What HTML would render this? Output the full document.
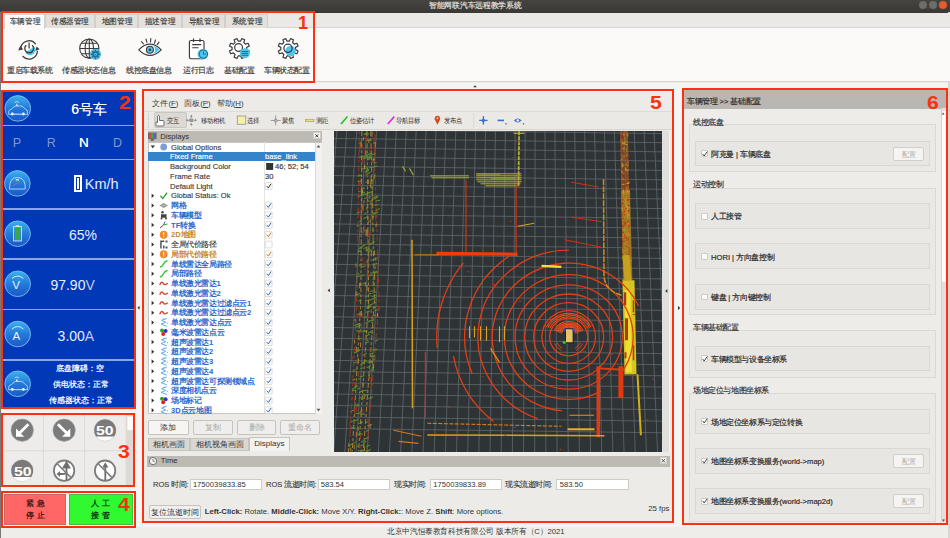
<!DOCTYPE html>
<html><head><meta charset="utf-8">
<style>
*{margin:0;padding:0;box-sizing:border-box}
html,body{width:950px;height:538px;overflow:hidden;background:#efede9;font-family:"Liberation Sans",sans-serif;color:#3c3c3c;position:relative}
.a{position:absolute}
.rb{position:absolute;border:2px solid #ff3010}
.lbl{position:absolute;color:#ff3010;font-weight:bold;font-size:18px;line-height:18px;transform:scaleX(1.18);transform-origin:0 0}
.t{position:absolute;white-space:nowrap;line-height:1}
/* title bar */
#tb{left:0;top:0;width:950px;height:12.5px;background:linear-gradient(#45443f,#3a3935)}
.wb{position:absolute;top:1.3px;width:8.2px;height:8.2px;border-radius:50%;background:#6e6d69}
/* tab row */
#tabrow{left:1px;top:12.5px;width:949px;height:15.7px;background:#ebe9e6;border-bottom:1px solid #d6d3ce}
.tab{position:absolute;-webkit-text-stroke:0.15px #363636;top:14px;height:14px;background:#e4e1dc;border:1px solid #d2cfca;border-bottom:none;font-size:8px;color:#363636;text-align:center;line-height:14px}
#tools{left:1px;top:28.2px;width:949px;height:53.6px;background:#fcfaf8;border-bottom:1px solid #d8d5d0}
.ic{position:absolute}
.il{position:absolute;top:66.8px;font-size:8px;color:#333;-webkit-text-stroke:0.15px #333;white-space:nowrap;line-height:8px;transform:scale(0.95);transform-origin:0 50%}
/* left */
#blue{left:3px;top:92px;width:131px;height:315px;background:#0038b8}
.sep{position:absolute;left:3px;width:131px;height:1.5px;background:#8aa6e6}
.wt{position:absolute;color:#fff;white-space:nowrap;line-height:1}
.circ{position:absolute;width:26px;height:26px;border-radius:50%;background:radial-gradient(circle at 50% 30%,#3aa8f0,#1d6fd6 60%,#1a5fc8);border:1px solid #6fb4f2}
.tr{position:absolute;white-space:nowrap;line-height:1;font-size:8px;-webkit-text-stroke:0.15px currentColor;transform:scale(0.95);transform-origin:0 50%}
.tb8{position:absolute;white-space:nowrap;line-height:1;font-size:7px;color:#2e2e2e;transform:scale(0.86,0.95);transform-origin:0 50%}
.btn{position:absolute;border:0.6px solid #c6c3bd;border-radius:2px;background:#efeeec;font-size:8px;line-height:14px;text-align:center;white-space:nowrap}
.tabb{position:absolute;border:0.6px solid #c6c3bd;font-size:8px;line-height:12.5px;text-align:center;color:#333;white-space:nowrap}
.tm{position:absolute;white-space:nowrap;line-height:1;font-size:8px;color:#3a3a3a;-webkit-text-stroke:0.12px #3a3a3a;transform:scale(0.94);transform-origin:0 50%}
.inp{position:absolute;height:11.9px;background:#fff;border:0.6px solid #cfccc6;font-size:7.6px;line-height:10.2px;padding-left:2.3px;color:#333;white-space:nowrap}
.gbox{position:absolute;left:689.3px;width:247.2px;border:0.8px solid #dcd9d4;background:#ebe9e5}
.rbox{position:absolute;left:695.2px;width:234.8px;border:0.8px solid #dbd8d3;background:#e8e6e2}
.chk{position:absolute;left:701.4px;width:6.8px;height:6.8px;background:#fcfcfb;border:0.5px solid #cdcac4;border-radius:1px}
.r6t{position:absolute;white-space:nowrap;line-height:1;font-size:8px;color:#262626;-webkit-text-stroke:0.18px #262626;transform:scale(0.95);transform-origin:0 50%}
.cfg{position:absolute;left:892.8px;width:31.5px;height:14px;background:#f5f4f2;border:0.6px solid #d2cfca;border-radius:2px;font-size:7px;line-height:13px;text-align:center;color:#aaa8a4}
.tr[style*="bold"]{-webkit-text-stroke:0}
</style></head>
<body>
<!-- title bar -->
<div id="tb" class="a">
  <div class="t" style="left:428.6px;top:2.3px;font-size:8px;font-weight:bold;color:#d6d3cc;transform:scaleX(0.965);transform-origin:0 0">智能网联汽车远程教学系统</div>
  <div class="wb" style="left:918.7px"></div>
  <div class="wb" style="left:928.9px"></div>
  <div class="wb" style="left:938.9px;background:#e65a2e"></div>
</div>
<div class="a" style="left:0;top:12px;width:1px;height:526px;background:#7a7977"></div>
<div class="a" style="left:948px;top:12px;width:2px;height:526px;background:#d8d6d2"></div>

<!-- region 1 toolbar -->
<div id="tabrow" class="a"></div>
<div id="tools" class="a"></div>
<div class="tab" style="left:4px;width:41px;background:#fbfaf8;height:15px;border-color:#d6d3ce"><span style="display:inline-block;transform:scaleX(0.95)">车辆管理</span></div>
<div class="tab" style="left:45px;width:50px"><span style="display:inline-block;transform:scaleX(0.95)">传感器管理</span></div>
<div class="tab" style="left:95px;width:43px"><span style="display:inline-block;transform:scaleX(0.95)">地图管理</span></div>
<div class="tab" style="left:138px;width:44px"><span style="display:inline-block;transform:scaleX(0.95)">描述管理</span></div>
<div class="tab" style="left:182px;width:43px"><span style="display:inline-block;transform:scaleX(0.95)">导航管理</span></div>
<div class="tab" style="left:225px;width:43px"><span style="display:inline-block;transform:scaleX(0.95)">系统管理</span></div>


<svg class="a" style="left:0;top:28px" width="320" height="40" viewBox="0 28 320 40">
 <g fill="none" stroke="#3d3d3d" stroke-width="1.3" stroke-linecap="round">
  <!-- restart -->
  <path d="M20.8 47.5 A8.4 8.4 0 0 1 35.5 43.8"/>
  <path d="M37.4 51.5 A8.4 8.4 0 0 1 23 56.5"/>
 </g>
 <path d="M36.6 46.4 L35.2 51 L39.6 49.2Z" fill="#3d3d3d"/>
 <path d="M18.2 50.6 L20.2 45.8 L23.2 49.4Z" fill="#3d3d3d"/>
 <path d="M34.39 46.39 A5.6 5.6 0 0 1 25.21 52.81 Z" fill="#4fc6f2"/>
 <path d="M32.2 45.2 A4.4 4.4 0 1 1 26.2 45.2" fill="none" stroke="#3d3d3d" stroke-width="1.3"/>
 <path d="M29.1 42.6 V48.4" stroke="#3d3d3d" stroke-width="1.2"/>
 <!-- globe -->
 <g fill="none" stroke="#3a3a3a" stroke-width="1.05">
  <circle cx="89.3" cy="48.5" r="9.6"/>
  <ellipse cx="89.3" cy="48.5" rx="4.2" ry="9.6"/>
  <path d="M89.3 38.9 V58.1 M79.7 48.5 H98.9 M81.3 43.2 H97.3 M81.3 53.8 H97.3"/>
 </g>
 <circle cx="95.5" cy="54.3" r="5.6" fill="#4fc6f2"/>
 <g fill="#2a6f8a"><circle cx="95.5" cy="54.3" r="3.3"/></g>
 <g stroke="#2a6f8a" stroke-width="1.4"><path d="M95.5 49.6 V59 M90.8 54.3 H100.2 M92.2 51 L98.8 57.6 M98.8 51 L92.2 57.6"/></g>
 <circle cx="95.5" cy="54.3" r="1.5" fill="#4fc6f2"/>
 <circle cx="95.5" cy="54.3" r="0.6" fill="#2a6f8a"/>
 <!-- eye -->
 <path d="M138.8 49.8 Q150 38.5 161.2 49.8 Q150 61 138.8 49.8Z" fill="#fff" stroke="#3a3a3a" stroke-width="1.15"/>
 <path d="M150.2 44.8 A5 5 0 0 1 150.2 54.8 Q156 53.5 159.7 49.8 Q156 46 150.2 44.8Z" fill="#4fc6f2"/>
 <circle cx="149.9" cy="49.8" r="3.5" fill="#4fc6f2" stroke="#3a3a3a" stroke-width="1.1"/>
 <circle cx="149.9" cy="49.8" r="1.3" fill="#3a3a3a"/>
 <g stroke="#3a3a3a" stroke-width="1.1" stroke-linecap="round">
  <path d="M141.5 41.5 L143.4 43.8 M146 39 L146.9 42.3 M150.8 38.6 L150.5 42 M155.5 40 L154.4 43.2 M159 42.2 L157.2 44.6"/>
 </g>
 <!-- notepad -->
 <rect x="189.4" y="40.5" width="14.6" height="18.2" rx="1.6" fill="#fff" stroke="#3a3a3a" stroke-width="1.15"/>
 <path d="M193.5 38.6 V42 M200 38.6 V42" stroke="#3a3a3a" stroke-width="1.2"/>
 <path d="M192.2 44.6 H201.2 M192.2 47.8 H198.5" stroke="#3a3a3a" stroke-width="1.05"/>
 <circle cx="202.9" cy="54.2" r="5.4" fill="#4fc6f2"/>
 <circle cx="203.4" cy="54.1" r="4.1" fill="none" stroke="#2a6f8a" stroke-width="1.1"/>
 <path d="M203.4 51.4 V54.1 H206" stroke="#2a6f8a" stroke-width="1" fill="none"/>
 <!-- gear1 -->

 <path d="M246.71 49.63 L249.30 50.95 L248.13 53.77 L245.37 52.88 L243.78 54.47 L244.67 57.23 L241.85 58.40 L240.53 55.81 L238.27 55.81 L236.95 58.40 L234.13 57.23 L235.02 54.47 L233.43 52.88 L230.67 53.77 L229.50 50.95 L232.09 49.63 L232.09 47.37 L229.50 46.05 L230.67 43.23 L233.43 44.12 L235.02 42.53 L234.13 39.77 L236.95 38.60 L238.27 41.19 L240.53 41.19 L241.85 38.60 L244.67 39.77 L243.78 42.53 L245.37 44.12 L248.13 43.23 L249.30 46.05 L246.71 47.37Z" fill="#fff" stroke="#3a3a3a" stroke-width="1.15" stroke-linejoin="round"/>
 <circle cx="238.6" cy="47.5" r="3.9" fill="none" stroke="#3a3a3a" stroke-width="1.2"/>
 <circle cx="244.9" cy="53.3" r="5" fill="#4fc6f2"/>
 <path d="M241.6 51.5 H248.2 M241.6 53.4 H248.2 M241.6 55.3 H248.2" stroke="#2a5f78" stroke-width="0.9"/>
 <path d="M295.51 49.63 L298.10 50.95 L296.93 53.77 L294.17 52.88 L292.58 54.47 L293.47 57.23 L290.65 58.40 L289.33 55.81 L287.07 55.81 L285.75 58.40 L282.93 57.23 L283.82 54.47 L282.23 52.88 L279.47 53.77 L278.30 50.95 L280.89 49.63 L280.89 47.37 L278.30 46.05 L279.47 43.23 L282.23 44.12 L283.82 42.53 L282.93 39.77 L285.75 38.60 L287.07 41.19 L289.33 41.19 L290.65 38.60 L293.47 39.77 L292.58 42.53 L294.17 44.12 L296.93 43.23 L298.10 46.05 L295.51 47.37Z" fill="#fff" stroke="#3a3a3a" stroke-width="1.15" stroke-linejoin="round"/>
 <circle cx="290.6" cy="51" r="5.2" fill="#4fc6f2"/>
 <circle cx="288" cy="48.3" r="4.1" fill="none" stroke="#3a3a3a" stroke-width="1.25"/>

 <!-- gear2 -->
</svg>
<div class="il" style="left:6.7px">重启车载系统</div>
<div class="il" style="left:62.3px">传感器状态信息</div>
<div class="il" style="left:126.3px">线控底盘信息</div>
<div class="il" style="left:182.8px">运行日志</div>
<div class="il" style="left:224px">基础配置</div>
<div class="il" style="left:264.3px">车辆状态配置</div>

<div class="rb" style="left:1px;top:10.8px;width:313.5px;height:72.3px"></div>
<div class="lbl" style="left:298px;top:14px;transform:none">1</div>

<!-- region 2 -->
<div class="a" style="left:1px;top:83px;width:947px;height:444px;background:#f3f4f4"></div>
<div id="blue" class="a"></div>
<div class="sep" style="top:124.5px"></div>
<div class="sep" style="top:158.5px"></div>
<div class="sep" style="top:208px"></div>
<div class="sep" style="top:258px"></div>
<div class="sep" style="top:308.5px"></div>
<div class="sep" style="top:359px"></div>

<!-- region 2 content -->
<svg class="a" style="left:0;top:0" width="140" height="410" viewBox="0 0 140 410">
 <defs>
  <linearGradient id="cg" x1="0" y1="0" x2="0" y2="1">
   <stop offset="0" stop-color="#3cb0ee"/><stop offset="0.55" stop-color="#2176da"/><stop offset="1" stop-color="#1b58c6"/>
  </linearGradient>
 </defs>
 <g fill="url(#cg)" stroke="#7cc0f2" stroke-width="0.9">
  <circle cx="17.8" cy="108.4" r="12.8"/>
  <circle cx="17.4" cy="183.4" r="12.8"/>
  <circle cx="17.6" cy="233.7" r="12.8"/>
  <circle cx="17.7" cy="283.8" r="12.8"/>
  <circle cx="17.7" cy="334" r="12.8"/>
  <circle cx="17.7" cy="383.8" r="12.8"/>
 </g>
 <!-- car glyph 1 -->
 <g fill="none" stroke="#d6ebfc" stroke-width="0.75" stroke-linejoin="round">
  <path id="carp" d="M8.6 114.3 L8.9 110.8 Q9.3 109.6 11.2 109.4 L14 106.8 Q15 106 16.5 106 L20.5 106 Q22 106 23 106.8 L25.6 109.4 Q27.3 109.8 27.4 111 L27.5 114.3 Z"/>
  <path d="M14.6 102.4 Q16.8 100.8 19 102.4"/>
  <path d="M16.8 103.6 V106"/>
  <use href="#carp" transform="translate(0,275.4)"/>
  <path d="M14.6 102.4 Q16.8 100.8 19 102.4" transform="translate(0,275.4)"/>
  <path d="M16.8 103.6 V106" transform="translate(0,275.4)"/>
 </g>
 <g fill="#eef7ff"><circle cx="12.3" cy="114" r="1.4"/><circle cx="23.4" cy="114" r="1.4"/><circle cx="16.8" cy="105.3" r="0.8"/>
  <circle cx="12.3" cy="389.4" r="1.4"/><circle cx="23.4" cy="389.4" r="1.4"/><circle cx="16.8" cy="380.7" r="0.8"/></g>
 <path d="M13.5 114 H22.2 M13.5 389.4 H22.2" stroke="#d6ebfc" stroke-width="0.8" stroke-dasharray="1.2 0.8"/>
 <!-- speedometer -->
 <path d="M9.5 189 Q9 177.5 17.4 177.5 Q25.8 177.5 25.3 189 Z" fill="none" stroke="#cfe6fb" stroke-width="0.8"/>
 <path d="M13 185.5 L20 181.8" stroke="#d06060" stroke-width="0.8"/>
 <rect x="15.8" y="179.3" width="3.2" height="1.2" fill="#e8f4ff"/>
 <!-- battery -->
 <rect x="13.6" y="226.6" width="7.8" height="14.3" fill="none" stroke="#d8ecfc" stroke-width="0.9"/>
 <rect x="14.8" y="228" width="5.4" height="12" fill="#3aa848"/>
 <rect x="15.8" y="225.3" width="3.4" height="1.4" fill="#f0e0c0"/>
 <!-- V / A -->
 <path d="M12 278.5 Q17.7 273.5 23.4 278.5" fill="none" stroke="#dfeefc" stroke-width="1"/>
 <path d="M12 329 Q17.7 324 23.4 329" fill="none" stroke="#dfeefc" stroke-width="1"/>
</svg>
<div class="wt" style="left:12.3px;top:279.5px;font-size:11.5px;color:#eef4ff">V</div>
<div class="wt" style="left:12.5px;top:330.5px;font-size:11.5px;color:#eef4ff">A</div>
<div class="wt" style="left:71.2px;top:101.5px;font-size:14px;color:#f2f5fc;text-shadow:0 0 0.4px #fff">6号车</div>
<div class="wt" style="left:12.8px;top:136.5px;font-size:12.5px;color:#8397c9">P</div>
<div class="wt" style="left:46.8px;top:136.5px;font-size:12.5px;color:#8397c9">R</div>
<div class="wt" style="left:79px;top:136px;font-size:13.5px;color:#ffffff;text-shadow:0 0 0.4px #fff">N</div>
<div class="wt" style="left:113px;top:136.5px;font-size:12.5px;color:#8397c9">D</div>
<div class="a" style="left:74px;top:175px;width:7.8px;height:16.5px;background:#fff"></div>
<div class="a" style="left:76px;top:177px;width:3.8px;height:12.5px;border:1px solid #0038b8;background:#fff"></div>
<div class="wt" style="left:84.8px;top:177px;font-size:14.5px;color:#e4eaf8">Km/h</div>
<div class="wt" style="left:69px;top:228px;font-size:14px;color:#e8eefa">65%</div>
<div class="wt" style="left:50.4px;top:278px;font-size:14px;color:#e8eefa">97.90<span style="color:#c2cde6">V</span></div>
<div class="wt" style="left:57.6px;top:328.5px;font-size:14px;color:#e8eefa">3.00<span style="color:#c2cde6">A</span></div>
<div class="wt" style="left:56.2px;top:365px;font-size:7.7px;font-weight:bold;color:#f2f5fc">底盘障碍：空</div>
<div class="wt" style="left:53.3px;top:381px;font-size:7.6px;font-weight:bold;color:#f2f5fc">供电状态：正常</div>
<div class="wt" style="left:49px;top:397.2px;font-size:7.6px;font-weight:bold;color:#f2f5fc">传感器状态：正常</div>
<div class="rb" style="left:1px;top:89.5px;width:135px;height:319.5px"></div>
<div class="lbl" style="left:119px;top:94px">2</div>

<!-- region 3 -->
<div class="a" style="left:3px;top:415px;width:130px;height:70px;background:#eeecea"></div>

<!-- region 3 content -->
<svg class="a" style="left:0;top:410px" width="140" height="80" viewBox="0 410 140 80">
 <g stroke="#d9d6d1" stroke-width="0.8">
  <line x1="43.5" y1="415" x2="43.5" y2="485"/>
  <line x1="84.5" y1="415" x2="84.5" y2="485"/>
  <line x1="3" y1="450.8" x2="125.5" y2="450.8"/>
 </g>
 <rect x="125.6" y="415" width="7.4" height="70" fill="#dddad5"/>
 <rect x="127.3" y="416.4" width="5.5" height="13.8" fill="#fbfaf9"/>
 <!-- sign1 -->
 <circle cx="22.2" cy="430.2" r="11.2" fill="#7b7b7b" stroke="#a8a8a8" stroke-width="0.6"/>
 <path d="M28.4 424.2 L19.6 433" stroke="#fff" stroke-width="2.7"/>
 <path d="M16 428.6 L16 436.8 L24.2 436.8 Z" fill="#fff"/>
 <!-- sign2 -->
 <circle cx="64.1" cy="430.2" r="11.2" fill="#7b7b7b" stroke="#a8a8a8" stroke-width="0.6"/>
 <path d="M57.9 424.2 L66.7 433" stroke="#fff" stroke-width="2.7"/>
 <path d="M70.3 428.6 L70.3 436.8 L62.1 436.8 Z" fill="#fff"/>
 <!-- sign3 -->
 <circle cx="105.1" cy="430.2" r="11" fill="#fff" stroke="#c8c8c8" stroke-width="0.6"/>
 <path d="M96.0 436.4 A11 11 0 1 1 114.2 436.4 Z" fill="#7a7a7a"/>
 <!-- sign4 -->
 <circle cx="22.2" cy="470.7" r="11" fill="#fff" stroke="#c8c8c8" stroke-width="0.6"/>
 <path d="M13.1 476.9 A11 11 0 1 1 31.3 476.9 Z" fill="#7a7a7a"/>
 <!-- sign5 -->
 <circle cx="64.1" cy="470.7" r="10.2" fill="#fff" stroke="#7d7d7d" stroke-width="1.8"/>
 <path d="M66.5 480 V466 M63.6 467.5 L66.5 462.5 L69.4 467.5 Z" stroke="#6e6e6e" stroke-width="1.8" fill="#6e6e6e"/>
 <path d="M66.5 472 Q66.5 474 62 474 H59" stroke="#6e6e6e" stroke-width="1.8" fill="none"/>
 <path d="M60 471 L56.5 474 L60 477 Z" fill="#6e6e6e"/>
 <path d="M57.4 464 L70.8 477.4" stroke="#7a7a7a" stroke-width="1.5"/>
 <!-- sign6 -->
 <circle cx="105.1" cy="470.7" r="10.2" fill="#fff" stroke="#7d7d7d" stroke-width="1.8"/>
 <path d="M105.3 480 V466" stroke="#6e6e6e" stroke-width="1.8"/>
 <path d="M102.2 467.5 L105.3 462.3 L108.4 467.5 Z" fill="#6e6e6e"/>
 <path d="M98.4 464 L111.8 477.4" stroke="#7a7a7a" stroke-width="1.5"/>
</svg>
<div class="wt" style="left:96.4px;top:425px;font-size:12.5px;font-weight:bold;color:#fff;transform:scaleX(1.27);transform-origin:0 0">50</div>
<div class="wt" style="left:13.5px;top:465.5px;font-size:12.5px;font-weight:bold;color:#fff;transform:scaleX(1.27);transform-origin:0 0">50</div>
<div class="rb" style="left:1px;top:413px;width:134px;height:74px"></div>
<div class="lbl" style="left:117.7px;top:442.5px">3</div>

<!-- region 4 -->
<div class="a" style="left:3.5px;top:493.5px;width:62.5px;height:31px;background:#ff6666;border:0.6px solid #c06a6a"></div>
<div class="a" style="left:69px;top:493.5px;width:63.5px;height:31px;background:#32f832;border:0.6px solid #48b848"></div>

<div class="wt" style="left:25.8px;top:500px;font-size:8px;font-weight:bold;color:#4a1818;letter-spacing:3px">紧急</div>
<div class="wt" style="left:25.8px;top:511.5px;font-size:8px;font-weight:bold;color:#4a1818;letter-spacing:3px">停止</div>
<div class="wt" style="left:91.3px;top:500px;font-size:8px;font-weight:bold;color:#0c3a0c;letter-spacing:3px">人工</div>
<div class="wt" style="left:91.3px;top:511.5px;font-size:8px;font-weight:bold;color:#0c3a0c;letter-spacing:3px">接管</div>
<div class="rb" style="left:1px;top:490.5px;width:134.5px;height:37.5px"></div>
<div class="lbl" style="left:118.3px;top:495.5px">4</div>

<!-- region 5 -->
<div class="a" style="left:144px;top:91.5px;width:528px;height:429.5px;background:#edebe8"></div>
<div class="a" style="left:662px;top:130.7px;width:8px;height:321.2px;background:#e2e0dc;border-right:1px solid #f4f3f1"></div>
<!--3D--><svg class="a" style="left:333.5px;top:130.7px" width="328.7" height="321.2" viewBox="333.5 130.7 328.7 321.2">
<rect x="333.5" y="130.7" width="328.7" height="321.2" fill="#2e3436"/>
<path d="M306.67 130.7 L277.30 451.9 M316.58 130.7 L288.47 451.9 M326.49 130.7 L299.64 451.9 M336.40 130.7 L310.81 451.9 M346.31 130.7 L321.98 451.9 M356.22 130.7 L333.15 451.9 M366.13 130.7 L344.32 451.9 M376.04 130.7 L355.49 451.9 M385.95 130.7 L366.66 451.9 M395.86 130.7 L377.83 451.9 M405.77 130.7 L389.00 451.9 M415.68 130.7 L400.17 451.9 M425.59 130.7 L411.34 451.9 M435.50 130.7 L422.51 451.9 M445.41 130.7 L433.68 451.9 M455.32 130.7 L444.85 451.9 M465.23 130.7 L456.02 451.9 M475.14 130.7 L467.19 451.9 M485.05 130.7 L478.36 451.9 M494.96 130.7 L489.53 451.9 M504.87 130.7 L500.70 451.9 M514.78 130.7 L511.87 451.9 M524.69 130.7 L523.04 451.9 M534.60 130.7 L534.21 451.9 M544.51 130.7 L545.38 451.9 M554.42 130.7 L556.55 451.9 M564.33 130.7 L567.72 451.9 M574.24 130.7 L578.89 451.9 M584.15 130.7 L590.06 451.9 M594.06 130.7 L601.23 451.9 M603.97 130.7 L612.40 451.9 M613.88 130.7 L623.57 451.9 M623.79 130.7 L634.74 451.9 M633.70 130.7 L645.91 451.9 M643.61 130.7 L657.08 451.9 M653.52 130.7 L668.25 451.9 M663.43 130.7 L679.42 451.9 M673.34 130.7 L690.59 451.9 M683.25 130.7 L701.76 451.9 M693.16 130.7 L712.93 451.9 M703.07 130.7 L724.10 451.9 M712.98 130.7 L735.27 451.9 M722.89 130.7 L746.44 451.9 M333.5 120.11 L662.2 124.38 M333.5 129.07 L662.2 133.34 M333.5 138.13 L662.2 142.40 M333.5 147.27 L662.2 151.54 M333.5 156.51 L662.2 160.78 M333.5 165.83 L662.2 170.10 M333.5 175.25 L662.2 179.52 M333.5 184.75 L662.2 189.02 M333.5 194.35 L662.2 198.62 M333.5 204.03 L662.2 208.30 M333.5 213.81 L662.2 218.08 M333.5 223.67 L662.2 227.94 M333.5 233.63 L662.2 237.90 M333.5 243.67 L662.2 247.94 M333.5 253.81 L662.2 258.08 M333.5 264.03 L662.2 268.30 M333.5 274.35 L662.2 278.62 M333.5 284.75 L662.2 289.02 M333.5 295.25 L662.2 299.52 M333.5 305.83 L662.2 310.10 M333.5 316.51 L662.2 320.78 M333.5 327.27 L662.2 331.54 M333.5 338.13 L662.2 342.40 M333.5 349.07 L662.2 353.34 M333.5 360.11 L662.2 364.38 M333.5 371.23 L662.2 375.50 M333.5 382.45 L662.2 386.72 M333.5 393.75 L662.2 398.02 M333.5 405.15 L662.2 409.42 M333.5 416.63 L662.2 420.90 M333.5 428.21 L662.2 432.48" stroke="#656c6f" stroke-width="0.75" fill="none"/>
<path d="M361.3 131 L361.3 139 L361.2 147 L361.2 155 L361.1 163 L361.1 171 L361.0 179 L361.0 187 L361.0 195 L360.9 203 L360.9 211 L360.8 219 L360.8 227 L360.7 235 L360.7 243 L360.6 251 L360.6 259 L360.5 267 L360.5 275 L360.4 283 L360.4 291 L360.4 299 L360.0 307 L359.5 315 L359.0 323 L358.6 331 L358.1 339 L357.7 347 L357.2 355 L356.8 363 L356.3 371 L355.9 379 L355.4 387 L355.0 395 L354.5 403 L354.1 411 L353.6 419 L353.1 427 L352.7 435 L352.2 443 L351.8 451M366.4 131 L366.5 139 L366.6 147 L366.7 155 L366.8 163 L366.8 171 L366.9 179 L367.0 187 L367.1 195 L367.2 203 L367.2 211 L367.3 219 L367.4 227 L367.5 235 L367.6 243 L367.7 251 L367.7 259 L367.8 267 L367.9 275 L368.0 283 L368.1 291 L368.1 299 L367.7 307 L367.2 315 L366.6 323 L366.1 331 L365.6 339 L365.0 347 L364.5 355 L364.0 363 L363.4 371 L362.9 379 L362.4 387 L361.8 395 L361.3 403 L360.8 411 L360.2 419 L359.7 427 L359.2 435 L358.6 443 L358.1 451M370.3 131 L370.4 139 L370.6 147 L370.8 155 L371.0 163 L371.2 171 L371.3 179 L371.5 187 L371.7 195 L371.9 203 L372.0 211 L372.2 219 L372.4 227 L372.6 235 L372.7 243 L372.9 251 L373.1 259 L373.3 267 L373.4 275 L373.6 283 L373.8 291 L374.0 299 L373.5 307 L372.9 315 L372.3 323 L371.7 331 L371.1 339 L370.5 347 L369.9 355 L369.3 363 L368.7 371 L368.2 379 L367.6 387 L367.0 395 L366.4 403 L365.8 411 L365.2 419 L364.6 427 L364.0 435 L363.4 443 L362.8 451" stroke="#b88a28" stroke-width="0.9" fill="none" stroke-dasharray="5 2 3 2"/>
<path d="M358.8 131 L358.7 139 L358.5 147 L358.4 155 L358.3 163 L358.2 171 L358.1 179 L358.0 187 L357.9 195 L357.8 203 L357.7 211 L357.6 219 L357.4 227 L357.3 235 L357.2 243 L357.1 251 L357.0 259 L356.9 267 L356.8 275 L356.7 283 L356.6 291 L356.5 299 L356.1 307 L355.7 315 L355.3 323 L354.8 331 L354.4 339 L354.0 347 L353.6 355 L353.2 363 L352.8 371 L352.4 379 L351.9 387 L351.5 395 L351.1 403 L350.7 411 L350.3 419 L349.9 427 L349.5 435 L349.0 443 L348.6 451M373.3 131 L373.5 139 L373.8 147 L374.0 155 L374.3 163 L374.5 171 L374.8 179 L375.0 187 L375.3 195 L375.5 203 L375.8 211 L376.0 219 L376.3 227 L376.5 235 L376.8 243 L377.0 251 L377.3 259 L377.5 267 L377.8 275 L378.0 283 L378.3 291 L378.5 299 L378.0 307 L377.4 315 L376.7 323 L376.1 331 L375.4 339 L374.8 347 L374.2 355 L373.5 363 L372.9 371 L372.2 379 L371.6 387 L371.0 395 L370.3 403 L369.7 411 L369.1 419 L368.4 427 L367.8 435 L367.1 443 L366.5 451" stroke="#a83a1c" stroke-width="0.8" fill="none" stroke-dasharray="3 3 6 2"/>
<path d="M367.4 276.0l4.8 -1.6M368.2 293.8l2.6 -0.9M370.7 333.0l2.3 -0.6M370.5 159.8l4.1 -0.5M365.7 446.2l4.0 -1.6M356.9 181.3l3.6 -0.5M360.8 191.8l2.1 -0.7M373.6 272.2l3.6 -1.5M369.9 291.2l3.4 -0.8M365.9 451.1l4.5 -2.1M360.3 232.0l2.9 -0.4M359.2 376.8l4.5 -1.3M364.0 438.4l2.0 -0.4M357.7 423.1l4.9 -1.5M367.4 154.2l4.3 -1.0M362.5 158.7l4.9 -2.3M361.0 168.6l2.3 -0.3M353.9 386.7l3.7 -1.2M369.8 191.9l2.4 -1.0M364.0 168.1l2.6 -0.6M362.9 442.6l2.9 -1.6M363.6 198.4l4.6 -1.9M373.6 162.9l2.6 -0.6M357.5 378.9l2.9 -0.4M366.7 159.6l2.7 -1.1M364.9 250.1l4.9 -1.7M373.6 315.3l2.5 -0.5M364.6 422.5l2.7 -0.5M371.2 368.2l2.6 -1.5M361.0 414.1l3.3 -0.5M372.6 143.1l2.7 -1.2M371.9 213.2l3.8 -0.9M369.5 187.0l2.2 -0.5M373.7 310.4l3.8 -0.9M352.3 425.4l2.0 -0.5M356.3 273.9l2.5 -0.7M356.8 314.5l3.1 -1.7M359.9 445.6l4.1 -1.6M357.3 175.8l2.1 -1.1M372.7 355.9l2.1 -0.9M371.3 285.6l3.0 -1.8M366.1 154.9l4.2 -2.3M366.2 367.5l4.4 -2.4M369.7 243.7l4.7 -2.5M372.3 264.7l4.6 -1.8M361.5 331.4l3.7 -1.5M367.6 156.5l5.0 -2.7M359.7 364.6l4.2 -1.6M373.5 272.2l2.3 -1.1M366.8 140.3l3.4 -0.7M362.6 355.0l3.8 -2.2M356.3 212.9l2.9 -1.3M359.5 195.8l4.7 -2.0M374.7 272.6l3.0 -1.3M364.3 194.5l4.4 -2.5M356.6 413.4l3.7 -1.0M365.4 174.4l4.5 -2.4M372.1 359.1l2.8 -0.5M361.1 275.4l2.6 -0.8M364.0 331.7l2.9 -1.5M355.9 446.1l2.2 -0.3M349.9 411.1l4.1 -1.6M371.6 230.0l2.1 -0.3M355.5 276.8l4.5 -1.0M357.5 175.9l3.9 -1.3M367.6 333.0l4.4 -2.6M356.4 350.6l3.4 -0.6M364.7 134.2l4.1 -0.8M362.7 218.2l4.1 -1.5M370.2 328.1l3.2 -1.6M350.2 421.8l4.8 -2.2M364.6 172.4l3.9 -2.2M367.4 251.7l4.6 -2.3M356.9 434.0l4.0 -0.8M369.0 362.6l3.9 -1.8M373.0 199.2l4.9 -2.9M372.8 303.2l3.0 -1.6M356.4 405.6l2.2 -0.7M371.9 307.5l3.5 -0.4M351.4 390.6l4.4 -0.8M371.7 238.3l2.4 -0.4M371.4 296.6l4.5 -2.0M357.4 434.5l4.8 -0.7M366.1 201.8l2.9 -1.3M364.4 335.9l4.5 -1.7M363.4 230.8l4.5 -2.5M372.1 197.6l4.9 -1.8M358.4 314.7l3.6 -1.3M353.9 325.1l4.9 -1.8M372.4 259.4l3.7 -1.3M353.3 352.6l3.6 -1.1M365.5 438.0l2.8 -0.9M364.3 171.5l4.4 -2.4M362.0 283.8l2.6 -1.1M350.7 427.9l4.3 -0.5M360.5 193.0l4.1 -1.1M368.3 244.8l2.3 -1.1M365.6 170.1l2.8 -0.5M364.7 301.0l3.1 -1.0M358.2 300.7l2.6 -1.1M364.6 335.8l4.6 -1.8M354.0 405.9l4.2 -2.1M354.8 420.6l2.9 -1.7M374.9 200.8l4.7 -0.8M369.9 207.6l2.8 -0.4M358.3 398.0l4.4 -0.7M369.9 260.1l2.1 -0.4M372.0 349.9l4.9 -0.8M372.1 293.1l3.5 -1.6M357.7 191.4l2.3 -0.3M366.0 307.9l3.7 -0.6M360.1 190.0l4.5 -2.7M350.0 428.4l2.2 -1.3M372.0 279.1l3.0 -1.0M364.6 296.2l3.8 -0.4M370.1 355.9l2.5 -0.8M359.8 368.2l2.6 -0.5M354.9 295.3l4.7 -2.3M370.4 357.0l3.9 -1.2M364.8 323.3l4.9 -2.5M373.6 213.7l4.2 -2.1M358.3 392.4l4.7 -2.5M368.6 353.9l4.3 -1.3M352.9 362.8l3.0 -1.0M362.9 134.1l3.9 -1.6M374.0 205.3l4.0 -1.1M365.0 342.6l3.6 -1.1M359.1 451.9l4.1 -2.0M347.8 445.5l3.8 -1.8M363.8 213.1l2.2 -0.4M357.4 251.4l2.8 -1.5M365.9 307.4l4.9 -1.9M359.2 450.3l4.4 -0.6M370.6 322.6l2.1 -1.2M365.0 182.1l2.5 -0.9M354.5 327.0l4.8 -1.5M368.5 299.9l3.1 -0.8M364.9 341.1l2.9 -1.3M356.1 225.8l2.7 -0.3M370.0 181.0l3.2 -1.7M352.1 371.1l5.0 -2.8M372.0 154.3l3.3 -1.1M352.1 443.3l3.6 -2.0M361.5 362.8l4.9 -2.5M355.9 324.6l3.9 -1.3M357.3 196.1l3.6 -0.6M369.7 272.9l3.4 -0.8M363.2 317.7l4.3 -1.6M365.1 451.1l4.2 -0.9M372.1 167.3l4.4 -1.8M361.1 246.1l4.1 -1.6M367.9 320.7l4.3 -0.8M374.8 210.7l4.7 -2.6M358.2 143.4l2.8 -0.9M355.3 330.9l3.6 -0.5M368.3 158.5l3.7 -1.5M365.4 250.6l2.6 -0.7M368.9 369.9l2.2 -0.4M363.0 390.6l4.3 -0.9M360.7 267.0l4.4 -1.3M374.5 340.7l3.0 -1.1M370.7 370.3l3.3 -0.9M371.7 161.9l2.2 -0.3M365.1 311.9l4.1 -1.0M352.2 379.8l2.6 -1.1M362.1 156.9l4.2 -1.9M358.7 221.6l3.1 -1.4M357.9 248.4l4.1 -1.6M366.8 425.7l4.7 -1.5M356.5 388.6l3.0 -0.9M365.5 430.9l2.7 -0.8M363.0 248.1l3.2 -0.9M366.7 193.3l4.4 -1.6M361.1 399.3l2.5 -1.2M354.5 413.6l2.1 -0.7M367.4 305.5l4.9 -2.1M351.4 389.0l3.6 -1.8M358.4 157.7l4.2 -2.3M367.6 157.9l2.4 -1.1M358.0 339.2l2.7 -1.3M372.4 298.2l3.2 -0.9M360.4 441.7l3.5 -1.3M366.7 362.3l4.7 -1.4M363.5 396.1l4.6 -2.3M367.8 398.5l4.9 -2.0M371.1 299.0l4.4 -1.4M358.3 265.8l4.2 -2.5M358.9 251.3l2.6 -0.8M375.0 224.5l2.2 -0.6M367.9 167.6l4.3 -0.8" stroke="#5e9a2a" stroke-width="1.05" fill="none" opacity="0.85"/>
<path d="M359.2 142.4v2.7M371.2 206.3v4.4M368.0 230.8v5.3M375.1 214.4v5.7M378.9 306.5v3.9M374.1 146.7v5.2M358.3 341.9v2.0M359.7 181.2v3.3M362.0 157.2v4.9M356.1 406.1v5.2M350.3 425.2v5.3M362.7 230.7v2.3M364.6 397.2v2.0M357.3 358.8v4.3M374.5 134.1v5.2M360.3 213.1v4.9M360.0 434.2v4.9M351.9 396.3v2.6M369.4 348.4v2.7M363.1 399.5v2.4M359.0 181.2v3.6M370.0 377.0v3.5M357.9 332.1v2.3M353.9 397.5v4.2M369.2 253.3v5.2M365.9 194.8v2.6M358.3 313.6v4.1M362.3 313.2v4.6M369.0 399.9v3.6M377.1 269.5v3.3M358.1 372.2v4.4M365.3 170.7v4.0M369.6 147.4v4.1M364.6 229.1v2.9M367.1 170.5v5.8M362.4 209.1v3.3M366.7 418.2v3.6M353.0 418.8v5.4M359.1 146.8v4.9M367.8 419.9v4.9M374.5 354.2v3.8M362.6 202.4v4.8M367.9 272.1v4.1M362.3 158.7v5.0M377.2 254.3v4.0M364.7 350.5v5.8M354.4 381.1v4.4M376.1 314.6v2.7M366.0 136.4v3.7M367.7 313.4v5.2M362.7 177.7v2.2M372.2 159.1v2.7M364.6 150.3v3.5M361.5 143.3v5.6M362.3 256.9v3.7M361.5 204.5v4.2M378.1 279.0v3.5M360.3 445.9v2.2M362.4 408.4v5.5M360.6 183.3v2.9M353.8 407.8v3.5M360.7 352.8v3.1M358.0 360.4v3.4M348.9 422.1v3.3M356.0 297.5v3.6M359.9 143.8v4.4M365.2 231.0v4.2M364.4 260.9v5.5M363.4 224.5v2.9M354.3 409.6v4.5M364.6 268.1v2.2M366.9 236.1v3.1M358.1 207.7v3.4M352.3 355.6v3.6M364.5 150.9v2.2" stroke="#a8301c" stroke-width="1" fill="none" opacity="0.85"/>
<path d="M365.4 150.7v4.3M362.1 190.1v2.7M367.9 300.2v3.1M374.0 250.0v4.9M360.6 409.9v4.5M367.5 216.3v2.6M371.5 131.1v5.4M366.6 284.9v5.8M367.8 305.2v2.6M372.7 280.8v3.4M364.3 164.7v3.8M360.4 328.6v3.5M363.3 226.5v3.6M357.6 426.4v4.0M355.5 263.1v3.6M364.0 446.1v4.6M363.1 136.7v3.4M364.0 164.8v4.0M363.7 395.8v2.6M360.6 420.7v3.4M370.6 176.2v5.9M371.6 360.5v2.8M371.5 315.9v3.3M366.2 246.7v2.5M374.2 174.3v4.2M360.8 310.7v5.6M363.7 393.3v2.5M375.5 223.4v3.0M360.5 141.0v5.9M360.0 342.2v4.7M355.8 346.2v5.8M365.1 281.6v4.5M368.6 374.2v3.9M377.0 312.5v4.1M372.9 363.8v4.9M369.6 423.4v4.7M374.6 266.1v2.9M377.0 312.8v2.4M354.7 318.8v2.1M366.8 229.6v5.7M360.0 282.5v3.2M359.1 282.5v5.5M369.3 195.6v2.8M361.2 188.8v4.7M370.8 250.4v5.5M362.5 204.3v5.7M369.8 219.6v2.4M360.5 323.3v3.0M367.8 220.3v2.7M347.9 448.0v3.8M370.6 309.3v3.4M362.5 382.2v4.0M374.0 272.2v5.1M366.4 206.5v2.9M355.6 291.0v4.4M373.2 215.2v2.3M366.1 330.2v3.1M370.2 182.0v5.3M348.4 442.4v4.0M350.3 447.5v3.8M374.8 141.7v5.1M354.0 339.4v3.4M375.3 256.9v3.5M363.5 199.9v2.7M365.7 229.8v6.0M361.7 189.2v3.6M355.8 431.5v5.1M373.3 157.4v3.3M357.9 357.7v4.9M360.7 178.0v3.1M368.4 138.6v4.3M353.7 444.1v4.7M370.5 200.1v4.7M366.6 260.0v2.7M368.1 179.1v4.8" stroke="#b88a28" stroke-width="1" fill="none" opacity="0.85"/>
<path d="M623.5 131 L625 200 L627 285" stroke="#a85a20" stroke-width="8" fill="none" opacity="0.55"/>
<path d="M625 190 L627.5 285" stroke="#c8a020" stroke-width="9" fill="none" opacity="0.6"/>
<path d="M620.7 131 L623 285 M626.5 131 L629 285" stroke="#b8501c" stroke-width="1.2" fill="none" opacity="0.8" stroke-dasharray="4 1.5"/>
<path d="M624.7 221.1v2.8M622.4 136.2v2.2M623.4 208.9v2.1M623.4 224.1v2.4M628.8 258.9v1.7M625.5 150.1v2.6M627.9 254.2h1.6M622.0 169.7h2.8M625.8 273.4h2.6M623.3 165.8v2.1M624.5 183.5v2.0M623.5 264.3v2.9M626.9 184.1v1.4M627.7 238.7v2.4M621.1 150.6v2.3M625.2 188.5v2.0M626.8 174.7v2.9M626.1 220.9h1.7M624.9 264.4h1.8M621.3 203.0h2.9M620.9 135.1v2.8M625.0 270.2h1.7M621.7 182.2v2.7M622.0 240.7v2.1M625.1 146.9v2.9M624.1 223.0h1.6M620.8 138.9h2.3M626.9 276.3v1.9M626.5 179.7v2.4M628.1 204.8v1.4M625.3 218.4v2.1M624.9 280.5h1.4M624.3 237.1h2.3M623.2 282.2v1.2M622.7 169.8v2.2M620.4 142.4v2.9M625.9 221.6h1.3M627.2 149.2v1.8M622.3 235.5h2.3M622.2 170.2h2.9M622.4 147.5v2.9M623.7 211.9v2.0M624.3 170.9v2.2M622.8 206.7h1.8M622.5 235.1v1.5M621.1 177.7h2.7M623.5 236.8v1.5M621.9 175.2h1.6M627.0 155.0h2.4" stroke="#a83018" stroke-width="0.81" fill="none"/>
<path d="M623.0 233.8v1.9M624.4 226.5v1.3M624.3 202.3v1.3M623.8 130.8v1.2M624.1 254.9h1.7M624.4 267.4h2.1M624.5 136.9v2.8M624.2 169.9h1.7M625.3 169.6h2.9M627.7 216.5v2.0M622.3 173.0h1.6M621.5 142.8h1.5M621.8 216.4v1.2M626.8 283.8v1.8M623.9 279.2h2.6M622.5 256.1v2.9M626.1 198.5h2.1M626.2 148.3v2.0M625.6 259.8h2.3M621.5 210.2h2.0M623.4 147.3v2.8M623.2 243.0h1.9M624.8 276.0h1.6M623.2 230.7h1.9M623.4 234.4h1.9M628.4 233.1v2.6M623.7 250.7h2.0M626.1 154.4v1.5M627.3 248.4v1.9M621.4 170.9v1.8M621.1 164.7h1.9M625.1 212.2h2.7M621.5 220.2h2.0M622.7 236.4h2.4M627.3 193.6h1.6M624.3 207.0v2.1M626.6 257.7v2.3M625.0 190.7h1.8M624.0 228.3v2.2M625.9 140.6v1.6M628.8 277.3v2.9M627.9 235.3h1.9M622.3 229.2h2.6M625.4 201.6v2.0M625.7 220.1v2.2M626.8 268.2h2.1M620.7 139.7v1.5M625.7 203.4h2.9" stroke="#88a828" stroke-width="0.93" fill="none"/>
<path d="M622.4 269.2h2.6M625.7 133.7h2.5M628.2 279.4h1.8M623.0 213.1h1.9M625.7 187.4h1.8M625.6 188.9h2.4M626.0 203.5v1.7M628.1 259.2v1.9M627.0 214.9h2.0M620.8 158.5h2.2M621.2 158.1v1.9M628.0 213.6v1.2M625.5 189.0v2.3M628.0 222.4v2.2M625.0 170.2h2.5M627.1 192.7h2.6M621.6 147.8h2.7M628.0 276.0v1.4M625.9 163.0v2.4M627.5 161.0v2.5M623.6 178.6v1.3M624.0 202.0h2.1M626.2 146.8h1.5M627.8 231.6v2.2M622.3 235.6v2.7M622.7 270.8h3.0M624.5 201.0h1.5M625.2 235.5h1.3M621.7 155.9h2.8M626.4 186.7h2.1M627.0 277.2h1.3M622.9 266.4v2.1M623.3 164.1v1.9M621.0 184.2h1.7M623.4 266.8v1.6M627.0 164.8h1.6M625.9 151.6h1.8M626.6 140.7v1.3M621.3 171.1h1.2M620.7 163.3h2.0M627.2 182.0h2.4M624.6 207.5v2.9M625.2 233.4h2.4M623.2 199.5h2.4M627.4 240.5v1.4" stroke="#c88a20" stroke-width="0.82" fill="none"/>
<path d="M627.5 261.7h2.3M627.4 272.3h3.0M625.1 138.2v2.8M624.7 185.7h1.9M622.5 216.9v2.8M625.3 283.7h1.9M626.9 199.1v1.5M621.3 156.8v1.7M628.8 249.2v2.9M624.5 270.4v1.7M622.9 134.1v1.9M623.0 159.0h1.5M628.2 209.6v1.5M624.6 223.5v1.9M626.1 163.0h1.9M624.1 234.0v2.4M628.3 224.1v3.0M626.6 258.6v3.0M622.7 221.6h2.0M624.8 157.5v1.9M625.3 246.3h1.9M621.4 139.3h2.1M628.9 282.5v1.5M627.4 199.4h2.7M626.7 185.6v2.5M626.3 237.3v2.9M624.8 194.7v1.5M622.1 232.1h1.4M627.5 247.6h1.9M624.3 208.4h1.9M623.4 187.9v3.0M628.8 281.0v2.1M625.4 152.6v1.5M623.3 273.2h3.0M629.2 276.4h2.0M623.3 214.5h1.5M622.0 225.2v1.5M623.4 131.2h2.1M623.9 210.0v2.4M621.7 199.0h1.6M622.1 240.9h2.9" stroke="#c83818" stroke-width="1.00" fill="none"/>
<path d="M627.9 260.7h3.0M622.0 193.7h1.9M624.1 267.2h1.5M621.4 191.8h2.3M622.5 278.7v1.7M624.9 260.3h1.2M624.3 141.0v3.0M621.6 207.3v3.0M626.9 190.7v2.0M624.8 144.3h2.3M626.2 261.9v2.4M621.4 141.9h1.8M627.1 207.4h1.9M621.4 143.6h2.6M622.5 134.4h2.2M622.6 250.5v2.2M625.2 167.4v2.1M622.2 248.5v1.4M625.9 183.2h2.9M627.4 215.5v1.8M621.9 164.4v2.5M626.7 190.8h2.7M626.5 214.6h2.6M622.4 184.0h1.7M622.7 267.3h1.4M627.2 282.3v2.2M625.1 205.8h1.4M625.4 206.3h2.3M622.9 274.7h1.5M625.9 135.6h2.1M621.2 178.7h1.8M627.2 234.7h1.4M623.0 189.3v2.9M625.1 212.0h2.0M629.0 281.2h1.5M627.2 207.5v2.0M623.8 253.8v1.4" stroke="#c8a030" stroke-width="0.97" fill="none"/>
<path d="M625.5 255 L627.5 280" stroke="#c8a020" stroke-width="7" fill="none"/>
<path d="M628 280 L630 374" stroke="#d8c420" stroke-width="12" fill="none"/>
<path d="M627 290 L628.5 372" stroke="#ece030" stroke-width="6" fill="none"/>
<path d="M637 374 L640.4 435" stroke="#d0b018" stroke-width="2" fill="none"/>
<path d="M624.5 292 L624.5 305" stroke="#a83a18" stroke-width="2.5"/>
<path d="M626 318 L626 340" stroke="#a83a18" stroke-width="3"/>
<path d="M625 352 L625 358" stroke="#a83a18" stroke-width="2"/>
<path d="M633 300 L633 312" stroke="#a83a18" stroke-width="1.5"/>
<path d="M633 345 L633 360" stroke="#a83a18" stroke-width="1.5"/>
<path d="M560.5 333.2A8.5 8.2 0 0 1 575.9 333.2M559.1 332.6A10.0 9.7 0 0 1 577.3 332.6M557.8 332.0A11.5 11.2 0 0 1 578.6 332.0M556.4 331.4A13.0 12.6 0 0 1 580.0 331.4M555.1 330.8A14.5 14.1 0 0 1 581.3 330.8M553.7 330.1A16.0 15.5 0 0 1 582.7 330.1M549.2 328.1A21.0 20.4 0 0 1 587.2 328.1M547.5 327.4A22.8 22.1 0 0 1 588.9 327.4M546.0 326.7A24.5 23.8 0 0 1 590.4 326.7" stroke="#f24c1a" stroke-width="1.05" fill="none"/>
<path d="M580.0 342.2A13.0 13.0 0 0 1 574.7 348.0M561.7 348.0A13.0 13.0 0 0 1 556.4 342.2M582.2 343.3A15.5 15.5 0 0 1 576.0 350.1M560.5 350.1A15.5 15.5 0 0 1 554.2 343.3" stroke="#e04418" stroke-width="1" fill="none"/>
<path d="M587.2 336.7A19.0 18.8 0 0 1 549.2 336.7M549.2 336.7A19.0 18.8 0 0 1 587.2 336.7M595.0 336.7A26.8 26.4 0 0 1 541.4 336.7M541.4 336.7A26.8 26.4 0 0 1 595.0 336.7M603.2 336.7A35.0 34.4 0 0 1 533.2 336.7M533.2 336.7A35.0 34.4 0 0 1 603.2 336.7M612.2 336.7A44.0 43.0 0 0 1 524.2 336.7M524.2 336.7A44.0 43.0 0 0 1 612.2 336.7M621.8 336.7A53.6 52.2 0 0 1 514.6 336.7M514.6 336.7A53.6 52.2 0 0 1 621.8 336.7M584.9 276.4A64.5 62.4 0 0 1 621.0 372.5M600.5 390.8A64.5 62.4 0 1 1 600.5 282.6M581.6 263.8A77.0 74.0 0 0 1 638.0 305.4M561.5 410.5A77.0 74.0 0 1 1 594.5 267.1M537.1 418.3A91.0 86.9 0 0 1 568.2 249.8M471.8 373.6A104.0 98.6 0 0 1 508.5 255.9M493.0 421.1A117.0 110.2 0 0 1 453.0 355.8M436.7 347.4A132.0 123.3 0 0 1 462.8 262.5" stroke="#e63c14" stroke-width="1.3" fill="none"/>
<path d="M429.4 175.5 L468.5 175.5 M431 177.5 L468.5 177.5" stroke="#b0b830" stroke-width="0.9"/>
<path d="M475.7 173.5 H521 M475.7 175.5 H521 M475.7 177.5 H521 M475.7 179.5 H521 M477 181.5 H521 M480 183.5 H520 M485 185.5 H519" stroke="#c0b030" stroke-width="0.95"/>
<path d="M476 174.5 H500 M490 178.5 H515" stroke="#88b030" stroke-width="0.8"/>
<path d="M518.6 131 L518 186" stroke="#b8b030" stroke-width="1.8" stroke-dasharray="4 1"/>
<path d="M513 133 H524" stroke="#c0a830" stroke-width="1.2"/>
<path d="M465.5 180 L465.5 252" stroke="#d83010" stroke-width="1.2"/>
<path d="M515.6 185 L515.6 254" stroke="#d83010" stroke-width="1.3"/>
<path d="M436 253 L517 254" stroke="#f03a10" stroke-width="3.2"/>
<path d="M414 254.5 L438 254.5" stroke="#d08020" stroke-width="0.9"/>
<path d="M517 226 L533.7 223" stroke="#e0a020" stroke-width="1"/>
<path d="M571 182 L598 186.7 M571.3 216.9 L601.4 221.4 M563.8 239.4 L601.4 247" stroke="#d03010" stroke-width="1"/>
<path d="M603 179 L603.5 276 Q604.5 290 621 295" stroke="#d08a20" stroke-width="1.5" fill="none" stroke-dasharray="6 1"/>
<path d="M541 265.5 L560.8 266.5" stroke="#f0e040" stroke-width="2.2"/>
<path d="M596 368 L623 369.5" stroke="#e03a12" stroke-width="2"/>
<path d="M597.8 366 L597.8 437" stroke="#e03a12" stroke-width="3.5"/>
<path d="M620.4 366 L620.4 397.7" stroke="#e03a12" stroke-width="5"/>
<path d="M426.8 423 L561 426" stroke="#d87a18" stroke-width="1.1" stroke-dasharray="4 1.5"/>
<path d="M490 348 L499 362" stroke="#d89020" stroke-width="1.3"/>
<path d="M426.8 434.6 L604 435.5" stroke="#e89a18" stroke-width="1.5"/>
<path d="M569 415 L593.5 415" stroke="#e07a18" stroke-width="1.2"/>
<path d="M567 429 L594 429" stroke="#f0b020" stroke-width="2"/>
<path d="M411.5 239.4 L412 408" stroke="#d8a020" stroke-width="1.5"/>
<path d="M424.8 351.4 L424.8 417.7" stroke="#d83010" stroke-width="1.1"/>
<path d="M393 430 L421 436 M398 441 L418 443" stroke="#d87818" stroke-width="1.2"/>
<path d="M402 166 L405 171 M409 168 L413 175" stroke="#a0b030" stroke-width="1.2"/>
<path d="M469 326 L469 337.9M474 326 L474 337.1M480 326 L480 340.2M486 326 L486 340.5M499 326 L499 341.9M504 326 L504 339.7" stroke="#e0a020" stroke-width="1.1"/>
<path d="M467.6 363.9h1.1M630.9 377.1h2.6M632.2 314.3h2.9M580.6 290.0h1.8M517.7 142.2h1.3M615.0 207.0h2.3M610.6 353.8h2.0M509.5 221.0h1.4M582.5 351.2h2.9M512.7 427.0h2.8M503.9 434.9h2.2M651.8 378.9h1.7M501.4 299.6h2.0M447.8 406.7h2.1M544.1 369.5h1.5M483.8 317.9h1.5M512.1 157.0h1.1M518.2 301.0h2.9M580.7 265.5h1.8M491.8 284.3h2.9M466.8 271.4h2.4M607.7 309.9h2.3M646.4 419.3h1.5M559.1 449.2h2.1M481.7 376.3h1.1" stroke="#c03214" stroke-width="1"/>
<rect x="565" y="328.5" width="7.6" height="14" fill="#e8c468" stroke="#1a1a1a" stroke-width="0.9"/>
<circle cx="563.8" cy="329.5" r="1.5" fill="#5040e0"/><circle cx="573" cy="329.5" r="1.5" fill="#5040e0"/><circle cx="563.8" cy="342" r="1.6" fill="#40c030"/>
</svg><!--/3D-->

<!-- region 5 -->
<div class="t" style="left:152.4px;top:99.6px;font-size:7.8px;color:#3c3c3c">文件(<u>F</u>)</div>
<div class="t" style="left:184.2px;top:99.6px;font-size:7.8px;color:#3c3c3c">面板(<u>P</u>)</div>
<div class="t" style="left:216.7px;top:99.6px;font-size:7.8px;color:#3c3c3c">帮助(<u>H</u>)</div>
<!-- displays panel -->
<div class="a" style="left:147.5px;top:131.3px;width:174.5px;height:11.1px;background:#bdbab4"></div>
<div class="t" style="left:160.3px;top:133.2px;font-size:7.6px;color:#2e2e2e">Displays</div>
<div class="a" style="left:313px;top:131.8px;width:7.6px;height:7.6px;background:#fbfbfa;border:0.5px solid #cfccc7"></div>
<div class="a" style="left:147.8px;top:142.4px;width:174.2px;height:271.4px;background:#fff;border:0.6px solid #c8c5bf"></div>
<div class="a" style="left:315px;top:142.6px;width:7px;height:271px;background:#f3f2f0;border-left:0.5px solid #dcd9d4"></div>
<div class="a" style="left:263.5px;top:142.4px;width:0.6px;height:271px;background:#e6e4e0"></div>
<div class="tr" style="left:171.3px;top:143.60px;color:#3a3a3a;">Global Options</div>
<div class="a" style="left:147.8px;top:152.28px;width:167.2px;height:9.15px;background:#3584c9"></div>
<div class="tr" style="left:169.9px;top:153.35px;color:#ffffff;">Fixed Frame</div>
<div class="tr" style="left:265px;top:153.35px;color:#fff">base_link</div>
<div class="tr" style="left:169.9px;top:163.10px;color:#3a3a3a;">Background Color</div>
<div class="tr" style="left:275.3px;top:163.10px;color:#333">46; 52; 54</div>
<div class="tr" style="left:169.9px;top:172.85px;color:#3a3a3a;">Frame Rate</div>
<div class="tr" style="left:265px;top:172.85px;color:#333">30</div>
<div class="tr" style="left:169.9px;top:182.60px;color:#3a3a3a;">Default Light</div>
<div class="tr" style="left:171.3px;top:192.35px;color:#3a3a3a;">Global Status: Ok</div>
<div class="tr" style="left:171.3px;top:202.10px;color:#2c68cc;font-weight:bold;">网格</div>
<div class="tr" style="left:171.3px;top:211.85px;color:#2c68cc;font-weight:bold;">车辆模型</div>
<div class="tr" style="left:171.3px;top:221.60px;color:#2c68cc;font-weight:bold;">TF转换</div>
<div class="tr" style="left:171.3px;top:231.35px;color:#c8861c;font-weight:bold;">2D地图</div>
<div class="tr" style="left:171.3px;top:241.10px;color:#3a3a3a;">全局代价路径</div>
<div class="tr" style="left:171.3px;top:250.85px;color:#c8861c;font-weight:bold;">局部代价路径</div>
<div class="tr" style="left:171.3px;top:260.60px;color:#2c68cc;font-weight:bold;">单线雷达全局路径</div>
<div class="tr" style="left:171.3px;top:270.35px;color:#2c68cc;font-weight:bold;">局部路径</div>
<div class="tr" style="left:171.3px;top:280.10px;color:#2c68cc;font-weight:bold;">单线激光雷达1</div>
<div class="tr" style="left:171.3px;top:289.85px;color:#2c68cc;font-weight:bold;">单线激光雷达2</div>
<div class="tr" style="left:171.3px;top:299.60px;color:#2c68cc;font-weight:bold;">单线激光雷达过滤点云1</div>
<div class="tr" style="left:171.3px;top:309.35px;color:#2c68cc;font-weight:bold;">单线激光雷达过滤点云2</div>
<div class="tr" style="left:171.3px;top:319.10px;color:#2c68cc;font-weight:bold;">单线激光雷达点云</div>
<div class="tr" style="left:171.3px;top:328.85px;color:#2c68cc;font-weight:bold;">毫米波雷达点云</div>
<div class="tr" style="left:171.3px;top:338.60px;color:#2c68cc;font-weight:bold;">超声波雷达1</div>
<div class="tr" style="left:171.3px;top:348.35px;color:#2c68cc;font-weight:bold;">超声波雷达2</div>
<div class="tr" style="left:171.3px;top:358.10px;color:#2c68cc;font-weight:bold;">超声波雷达3</div>
<div class="tr" style="left:171.3px;top:367.85px;color:#2c68cc;font-weight:bold;">超声波雷达4</div>
<div class="tr" style="left:171.3px;top:377.60px;color:#2c68cc;font-weight:bold;">超声波雷达可探测领域点</div>
<div class="tr" style="left:171.3px;top:387.35px;color:#2c68cc;font-weight:bold;">深度相机点云</div>
<div class="tr" style="left:171.3px;top:397.10px;color:#2c68cc;font-weight:bold;">场地标记</div>
<div class="tr" style="left:171.3px;top:406.85px;color:#2c68cc;font-weight:bold;">3D点云地图</div>
<svg class="a" style="left:0;top:0" width="680" height="540" viewBox="0 0 680 540">
<path d="M150.6 145.40 L155 145.40 L152.8 148.20 Z" fill="#333"/>
<circle cx="163.7" cy="147.0" r="3.4" fill="#7d9fd6"/>
<rect x="266.5" y="163.30" width="6.4" height="6.4" fill="#2e3436" stroke="#111" stroke-width="0.5"/>
<rect x="265.3" y="182.60" width="6.8" height="6.8" rx="0.8" fill="#fdfdfd" stroke="#c9c6c0" stroke-width="0.6"/>
<path d="M266.7 186.00 L268.4 187.90 L271 183.80" stroke="#333" stroke-width="1" fill="none"/>
<path d="M151.6 193.55 L154.2 195.75 L151.6 197.95 Z" fill="#333"/>
<path d="M160.5 195.75 L162.8 198.55 L167 192.75" stroke="#2f9a2f" stroke-width="1.3" fill="none"/>
<path d="M151.6 203.30 L154.2 205.50 L151.6 207.70 Z" fill="#333"/>
<path d="M159.3 205.50 L163.7 202.90 L168.1 205.50 L163.7 208.10Z" fill="#9a9a9a"/><path d="M161.5 205.50 H165.9" stroke="#d0d0d0" stroke-width="0.5"/>
<rect x="265.3" y="202.10" width="6.8" height="6.8" rx="0.8" fill="#fdfdfd" stroke="#c9c6c0" stroke-width="0.6"/>
<path d="M266.7 205.50 L268.4 207.40 L271 203.30" stroke="#2c68cc" stroke-width="1" fill="none"/>
<path d="M151.6 213.05 L154.2 215.25 L151.6 217.45 Z" fill="#333"/>
<rect x="161" y="214.25" width="5.5" height="3.5" fill="#444"/><circle cx="162.5" cy="212.25" r="1.2" fill="#444"/><circle cx="161.5" cy="218.45" r="1" fill="#444"/><circle cx="166" cy="218.45" r="1" fill="#444"/>
<rect x="265.3" y="211.85" width="6.8" height="6.8" rx="0.8" fill="#fdfdfd" stroke="#c9c6c0" stroke-width="0.6"/>
<path d="M266.7 215.25 L268.4 217.15 L271 213.05" stroke="#2c68cc" stroke-width="1" fill="none"/>
<path d="M151.6 222.80 L154.2 225.00 L151.6 227.20 Z" fill="#333"/>
<path d="M160 228.00 L163.5 225.00" stroke="#d23" stroke-width="1"/><path d="M163.5 225.00 L167.5 224.00" stroke="#3a3" stroke-width="1"/><path d="M163.5 225.00 L165 221.50" stroke="#36c" stroke-width="1"/>
<rect x="265.3" y="221.60" width="6.8" height="6.8" rx="0.8" fill="#fdfdfd" stroke="#c9c6c0" stroke-width="0.6"/>
<path d="M266.7 225.00 L268.4 226.90 L271 222.80" stroke="#2c68cc" stroke-width="1" fill="none"/>
<path d="M151.6 232.55 L154.2 234.75 L151.6 236.95 Z" fill="#333"/>
<circle cx="163.7" cy="234.75" r="3.9" fill="#ee8a2a"/><rect x="163.2" y="232.25" width="1" height="3" fill="#fff"/><rect x="163.2" y="235.95" width="1" height="1" fill="#fff"/>
<rect x="265.3" y="231.35" width="6.8" height="6.8" rx="0.8" fill="#fdfdfd" stroke="#c9c6c0" stroke-width="0.6"/>
<path d="M266.7 234.75 L268.4 236.65 L271 232.55" stroke="#b8801c" stroke-width="1" fill="none"/>
<path d="M151.6 242.30 L154.2 244.50 L151.6 246.70 Z" fill="#333"/>
<path d="M160.2 240.50 h4 v1.5 h-2.5 v6.5 h-1.5z M165.5 240.50 h2 v2 h-2z M165.5 246.50 h2 v2 h-2z M163 245.50 h1.5 v3 h-1.5z" fill="#555"/>
<rect x="265.3" y="241.10" width="6.8" height="6.8" rx="0.8" fill="#fdfdfd" stroke="#c9c6c0" stroke-width="0.6"/>
<path d="M151.6 252.05 L154.2 254.25 L151.6 256.45 Z" fill="#333"/>
<circle cx="163.7" cy="254.25" r="3.9" fill="#ee8a2a"/><rect x="163.2" y="251.75" width="1" height="3" fill="#fff"/><rect x="163.2" y="255.45" width="1" height="1" fill="#fff"/>
<rect x="265.3" y="250.85" width="6.8" height="6.8" rx="0.8" fill="#fdfdfd" stroke="#c9c6c0" stroke-width="0.6"/>
<path d="M266.7 254.25 L268.4 256.15 L271 252.05" stroke="#b8801c" stroke-width="1" fill="none"/>
<path d="M151.6 261.80 L154.2 264.00 L151.6 266.20 Z" fill="#333"/>
<path d="M160 267.00 Q162 267.00 163.5 264.00 Q165 261.00 167.5 260.80" stroke="#2ec22e" stroke-width="1.4" fill="none"/>
<rect x="265.3" y="260.60" width="6.8" height="6.8" rx="0.8" fill="#fdfdfd" stroke="#c9c6c0" stroke-width="0.6"/>
<path d="M266.7 264.00 L268.4 265.90 L271 261.80" stroke="#2c68cc" stroke-width="1" fill="none"/>
<path d="M151.6 271.55 L154.2 273.75 L151.6 275.95 Z" fill="#333"/>
<path d="M160 276.75 Q162 276.75 163.5 273.75 Q165 270.75 167.5 270.55" stroke="#2ec22e" stroke-width="1.4" fill="none"/>
<rect x="265.3" y="270.35" width="6.8" height="6.8" rx="0.8" fill="#fdfdfd" stroke="#c9c6c0" stroke-width="0.6"/>
<path d="M266.7 273.75 L268.4 275.65 L271 271.55" stroke="#2c68cc" stroke-width="1" fill="none"/>
<path d="M151.6 281.30 L154.2 283.50 L151.6 285.70 Z" fill="#333"/>
<path d="M159.8 285.00 Q161 281.00 163 283.00 Q164.5 286.00 167.8 283.30" stroke="#e03a2a" stroke-width="1.4" fill="none"/>
<rect x="265.3" y="280.10" width="6.8" height="6.8" rx="0.8" fill="#fdfdfd" stroke="#c9c6c0" stroke-width="0.6"/>
<path d="M266.7 283.50 L268.4 285.40 L271 281.30" stroke="#2c68cc" stroke-width="1" fill="none"/>
<path d="M151.6 291.05 L154.2 293.25 L151.6 295.45 Z" fill="#333"/>
<path d="M159.8 294.75 Q161 290.75 163 292.75 Q164.5 295.75 167.8 293.05" stroke="#e03a2a" stroke-width="1.4" fill="none"/>
<rect x="265.3" y="289.85" width="6.8" height="6.8" rx="0.8" fill="#fdfdfd" stroke="#c9c6c0" stroke-width="0.6"/>
<path d="M266.7 293.25 L268.4 295.15 L271 291.05" stroke="#2c68cc" stroke-width="1" fill="none"/>
<path d="M151.6 300.80 L154.2 303.00 L151.6 305.20 Z" fill="#333"/>
<path d="M159.8 304.50 Q161 300.50 163 302.50 Q164.5 305.50 167.8 302.80" stroke="#e03a2a" stroke-width="1.4" fill="none"/>
<rect x="265.3" y="299.60" width="6.8" height="6.8" rx="0.8" fill="#fdfdfd" stroke="#c9c6c0" stroke-width="0.6"/>
<path d="M266.7 303.00 L268.4 304.90 L271 300.80" stroke="#2c68cc" stroke-width="1" fill="none"/>
<path d="M151.6 310.55 L154.2 312.75 L151.6 314.95 Z" fill="#333"/>
<path d="M159.8 314.25 Q161 310.25 163 312.25 Q164.5 315.25 167.8 312.55" stroke="#e03a2a" stroke-width="1.4" fill="none"/>
<rect x="265.3" y="309.35" width="6.8" height="6.8" rx="0.8" fill="#fdfdfd" stroke="#c9c6c0" stroke-width="0.6"/>
<path d="M266.7 312.75 L268.4 314.65 L271 310.55" stroke="#2c68cc" stroke-width="1" fill="none"/>
<path d="M151.6 320.30 L154.2 322.50 L151.6 324.70 Z" fill="#333"/>
<path d="M166.8 318.50 L161.5 320.30 L165.8 322.20 L161 324.10 L166.8 326.30" stroke="#5aa6e6" stroke-width="0.95" fill="none"/><circle cx="164" cy="318.90" r="0.6" fill="#5aa6e6"/><circle cx="167.6" cy="323.10" r="0.6" fill="#5aa6e6"/>
<rect x="265.3" y="319.10" width="6.8" height="6.8" rx="0.8" fill="#fdfdfd" stroke="#c9c6c0" stroke-width="0.6"/>
<path d="M266.7 322.50 L268.4 324.40 L271 320.30" stroke="#2c68cc" stroke-width="1" fill="none"/>
<path d="M151.6 330.05 L154.2 332.25 L151.6 334.45 Z" fill="#333"/>
<circle cx="162" cy="330.45" r="2" fill="#2a2"/><circle cx="165.6" cy="331.05" r="2" fill="#33c"/><circle cx="163.2" cy="334.05" r="2" fill="#d22"/>
<rect x="265.3" y="328.85" width="6.8" height="6.8" rx="0.8" fill="#fdfdfd" stroke="#c9c6c0" stroke-width="0.6"/>
<path d="M266.7 332.25 L268.4 334.15 L271 330.05" stroke="#2c68cc" stroke-width="1" fill="none"/>
<path d="M151.6 339.80 L154.2 342.00 L151.6 344.20 Z" fill="#333"/>
<path d="M166.8 338.00 L161.5 339.80 L165.8 341.70 L161 343.60 L166.8 345.80" stroke="#5aa6e6" stroke-width="0.95" fill="none"/><circle cx="164" cy="338.40" r="0.6" fill="#5aa6e6"/><circle cx="167.6" cy="342.60" r="0.6" fill="#5aa6e6"/>
<rect x="265.3" y="338.60" width="6.8" height="6.8" rx="0.8" fill="#fdfdfd" stroke="#c9c6c0" stroke-width="0.6"/>
<path d="M266.7 342.00 L268.4 343.90 L271 339.80" stroke="#2c68cc" stroke-width="1" fill="none"/>
<path d="M151.6 349.55 L154.2 351.75 L151.6 353.95 Z" fill="#333"/>
<path d="M166.8 347.75 L161.5 349.55 L165.8 351.45 L161 353.35 L166.8 355.55" stroke="#5aa6e6" stroke-width="0.95" fill="none"/><circle cx="164" cy="348.15" r="0.6" fill="#5aa6e6"/><circle cx="167.6" cy="352.35" r="0.6" fill="#5aa6e6"/>
<rect x="265.3" y="348.35" width="6.8" height="6.8" rx="0.8" fill="#fdfdfd" stroke="#c9c6c0" stroke-width="0.6"/>
<path d="M266.7 351.75 L268.4 353.65 L271 349.55" stroke="#2c68cc" stroke-width="1" fill="none"/>
<path d="M151.6 359.30 L154.2 361.50 L151.6 363.70 Z" fill="#333"/>
<path d="M166.8 357.50 L161.5 359.30 L165.8 361.20 L161 363.10 L166.8 365.30" stroke="#5aa6e6" stroke-width="0.95" fill="none"/><circle cx="164" cy="357.90" r="0.6" fill="#5aa6e6"/><circle cx="167.6" cy="362.10" r="0.6" fill="#5aa6e6"/>
<rect x="265.3" y="358.10" width="6.8" height="6.8" rx="0.8" fill="#fdfdfd" stroke="#c9c6c0" stroke-width="0.6"/>
<path d="M266.7 361.50 L268.4 363.40 L271 359.30" stroke="#2c68cc" stroke-width="1" fill="none"/>
<path d="M151.6 369.05 L154.2 371.25 L151.6 373.45 Z" fill="#333"/>
<path d="M166.8 367.25 L161.5 369.05 L165.8 370.95 L161 372.85 L166.8 375.05" stroke="#5aa6e6" stroke-width="0.95" fill="none"/><circle cx="164" cy="367.65" r="0.6" fill="#5aa6e6"/><circle cx="167.6" cy="371.85" r="0.6" fill="#5aa6e6"/>
<rect x="265.3" y="367.85" width="6.8" height="6.8" rx="0.8" fill="#fdfdfd" stroke="#c9c6c0" stroke-width="0.6"/>
<path d="M266.7 371.25 L268.4 373.15 L271 369.05" stroke="#2c68cc" stroke-width="1" fill="none"/>
<path d="M151.6 378.80 L154.2 381.00 L151.6 383.20 Z" fill="#333"/>
<path d="M166.8 377.00 L161.5 378.80 L165.8 380.70 L161 382.60 L166.8 384.80" stroke="#5aa6e6" stroke-width="0.95" fill="none"/><circle cx="164" cy="377.40" r="0.6" fill="#5aa6e6"/><circle cx="167.6" cy="381.60" r="0.6" fill="#5aa6e6"/>
<rect x="265.3" y="377.60" width="6.8" height="6.8" rx="0.8" fill="#fdfdfd" stroke="#c9c6c0" stroke-width="0.6"/>
<path d="M266.7 381.00 L268.4 382.90 L271 378.80" stroke="#2c68cc" stroke-width="1" fill="none"/>
<path d="M151.6 388.55 L154.2 390.75 L151.6 392.95 Z" fill="#333"/>
<path d="M166.8 386.75 L161.5 388.55 L165.8 390.45 L161 392.35 L166.8 394.55" stroke="#5aa6e6" stroke-width="0.95" fill="none"/><circle cx="164" cy="387.15" r="0.6" fill="#5aa6e6"/><circle cx="167.6" cy="391.35" r="0.6" fill="#5aa6e6"/>
<rect x="265.3" y="387.35" width="6.8" height="6.8" rx="0.8" fill="#fdfdfd" stroke="#c9c6c0" stroke-width="0.6"/>
<path d="M266.7 390.75 L268.4 392.65 L271 388.55" stroke="#2c68cc" stroke-width="1" fill="none"/>
<path d="M151.6 398.30 L154.2 400.50 L151.6 402.70 Z" fill="#333"/>
<circle cx="162" cy="398.70" r="2" fill="#2a2"/><circle cx="165.6" cy="399.30" r="2" fill="#33c"/><circle cx="163.2" cy="402.30" r="2" fill="#d22"/>
<rect x="265.3" y="397.10" width="6.8" height="6.8" rx="0.8" fill="#fdfdfd" stroke="#c9c6c0" stroke-width="0.6"/>
<path d="M266.7 400.50 L268.4 402.40 L271 398.30" stroke="#2c68cc" stroke-width="1" fill="none"/>
<path d="M151.6 408.05 L154.2 410.25 L151.6 412.45 Z" fill="#333"/>
<path d="M166.8 406.25 L161.5 408.05 L165.8 409.95 L161 411.85 L166.8 414.05" stroke="#5aa6e6" stroke-width="0.95" fill="none"/><circle cx="164" cy="406.65" r="0.6" fill="#5aa6e6"/><circle cx="167.6" cy="410.85" r="0.6" fill="#5aa6e6"/>
<rect x="265.3" y="406.85" width="6.8" height="6.8" rx="0.8" fill="#fdfdfd" stroke="#c9c6c0" stroke-width="0.6"/>
<path d="M266.7 410.25 L268.4 412.15 L271 408.05" stroke="#2c68cc" stroke-width="1" fill="none"/>
 <path d="M316.6 147.4 L318.5 145 L320.4 147.4Z" fill="#555"/>
 <path d="M316.6 408.8 L318.5 411.2 L320.4 408.8Z" fill="#555"/>
 <!-- displays icon -->
 <rect x="148" y="132.6" width="8.6" height="6.5" fill="#6a6a6a"/>
 <rect x="148.9" y="133.4" width="2.3" height="4.9" fill="#d84040"/><rect x="151.2" y="133.4" width="2.3" height="4.9" fill="#40b040"/><rect x="153.5" y="133.4" width="2.3" height="4.9" fill="#6060d0"/>
 <rect x="150.8" y="139.2" width="3" height="1.6" fill="#555"/>
 <path d="M315.3 134.3 L318.3 137.3 M318.3 134.3 L315.3 137.3" stroke="#333" stroke-width="1"/>
</svg>

<!-- toolbar -->
<div class="a" style="left:144px;top:110.8px;width:528px;height:19px;background:#ebe9e5;border-top:0.6px solid #dedbd6;border-bottom:0.6px solid #d9d6d1"></div>
<div class="a" style="left:147.5px;top:112.5px;width:1px;height:15px;border-left:1px dotted #c8c5c0"></div>
<div class="a" style="left:153.7px;top:112px;width:33.8px;height:16.4px;background:#dcd9d4;border:0.6px solid #c9c6c0;border-radius:2px"></div>
<svg class="a" style="left:0;top:0" width="680" height="540" viewBox="0 0 680 540">
 <!-- hand -->
 <path d="M156 122 L156 125.2 Q156 126 157 126 L163 126 Q164 126 164 125 L164 121.5 Q164 120.5 163 120.5 L159.5 120.5 L159.5 116.5 Q159.5 115.5 158.5 115.5 Q157.5 115.5 157.5 116.5 L157.5 122.5 L156.8 121.8 Z" fill="#fff" stroke="#444" stroke-width="0.75"/>
 <!-- move camera -->
 <g stroke="#8a8a8a" stroke-width="0.9" fill="none"><path d="M191.3 115.5 V118 M191.3 122.8 V125.3 M186.5 120.3 H189 M193.6 120.3 H196.1"/></g><path d="M189.8 116.6 L191.3 114.8 L192.8 116.6Z M189.8 124 L191.3 125.8 L192.8 124Z M187.6 118.8 L185.8 120.3 L187.6 121.8Z M195 118.8 L196.8 120.3 L195 121.8Z" fill="#8a8a8a"/><rect x="189.2" y="118.6" width="4.2" height="3.4" rx="0.6" fill="#9a9a9a"/>
 <!-- select -->
 <rect x="237.2" y="116" width="8.6" height="8.2" fill="#f6f0a8" stroke="#777" stroke-width="0.6"/>
 <!-- focus -->
 <g stroke="#888" stroke-width="0.8" fill="none"><path d="M275.7 115.5 V125.5 M270.7 120.5 H280.7"/><circle cx="275.7" cy="120.5" r="1.5" fill="#bbb"/></g>
 <!-- measure -->
 <rect x="305.6" y="119.2" width="8.4" height="2.6" fill="#e8e070" stroke="#888" stroke-width="0.5"/>
 <!-- pose estimate -->
 <path d="M341 124 L347.5 116.5" stroke="#22c022" stroke-width="1.6"/>
 <!-- nav goal -->
 <path d="M387.8 124 L394.3 116.5" stroke="#e022e0" stroke-width="1.6"/>
 <!-- publish point -->
 <path d="M437.4 124.8 L434.8 119.5 A2.8 2.8 0 1 1 440 119.5 Z" fill="#d04818"/>
 <circle cx="437.4" cy="118.2" r="1" fill="#f8d0b0"/>
 <line x1="473.7" y1="113" x2="473.7" y2="128" stroke="#d4d1cc" stroke-width="0.8"/>
 <!-- plus -->
 <path d="M483.4 116.2 V124.6 M479.2 120.4 H487.6" stroke="#3a6fd0" stroke-width="1.4"/>
 <circle cx="483.4" cy="120.4" r="1.6" fill="#3a6fd0"/>
 <!-- minus -->
 <path d="M497.6 120.4 H504" stroke="#3a6fd0" stroke-width="1.6"/>
 <path d="M505 123.5 L507 123.5 L506 124.8Z" fill="#333"/>
 <!-- eye -->
 <path d="M514 120.5 Q517.8 116.6 521.6 120.5 Q517.8 124.4 514 120.5Z" fill="#3a6fd0"/>
 <circle cx="517.8" cy="120.5" r="1.3" fill="#fff"/>
 <path d="M522.5 123.5 L524.5 123.5 L523.5 124.8Z" fill="#333"/>
 <!-- splitter arrows -->
 <path d="M329.8 288.6 L327.6 290.4 L329.8 292.2Z" fill="#333"/>
 <path d="M667.4 289 L665.2 291 L667.4 293Z" fill="#333"/>
 <path d="M139.6 306 L137.4 307.8 L139.6 309.6Z" fill="#333"/>
 <path d="M678 306 L680.2 308 L678 310Z" fill="#333"/>
 <path d="M473.2 87.3 L475 85.3 L476.8 87.3Z" fill="#333"/>
 <!-- clock -->
 <circle cx="153" cy="461.1" r="3.6" fill="#f4f4f4" stroke="#666" stroke-width="0.9"/>
 <path d="M153 459 V461.3 H154.8" stroke="#555" stroke-width="0.7" fill="none"/>
 <path d="M661.2 458.8 L664.6 462.4 M664.6 458.8 L661.2 462.4" stroke="#333" stroke-width="0.8"/>
</svg>
<div class="tb8" style="left:166.7px;top:117px">交互</div>
<div class="tb8" style="left:201px;top:117px">移动相机</div>
<div class="tb8" style="left:246.8px;top:117px">选择</div>
<div class="tb8" style="left:282px;top:117px">聚焦</div>
<div class="tb8" style="left:316.3px;top:117px">测距</div>
<div class="tb8" style="left:350.3px;top:117px">位姿估计</div>
<div class="tb8" style="left:396.3px;top:117px">导航目标</div>
<div class="tb8" style="left:443.5px;top:117px">发布点</div>

<!-- buttons under tree -->
<div class="btn" style="left:148px;top:420px;width:40.5px;height:15.3px;background:#f6f5f3;color:#333">添加</div>
<div class="btn" style="left:192.6px;top:420px;width:40.4px;height:15.3px;color:#aaa7a2">复制</div>
<div class="btn" style="left:237px;top:420px;width:39px;height:15.3px;color:#aaa7a2">删除</div>
<div class="btn" style="left:280px;top:420px;width:40px;height:15.3px;color:#aaa7a2">重命名</div>
<!-- tabs -->
<div class="tabb" style="left:147.5px;top:438px;width:42.5px;height:13px;background:#dad7d2">相机画面</div>
<div class="tabb" style="left:190px;top:438px;width:59px;height:13px;background:#dad7d2">相机视角画面</div>
<div class="tabb" style="left:249px;top:436.8px;width:40.6px;height:14.4px;background:#f3f2f0;border-bottom:none">Displays</div>

<!-- time panel -->
<div class="a" style="left:147.1px;top:455.7px;width:522.5px;height:10.9px;background:#bdbab4"></div>
<div class="a" style="left:660px;top:457px;width:6.8px;height:7.2px;background:#f4f3f1;border:0.5px solid #d0cdc8"></div>
<svg class="a" style="left:0;top:0" width="680" height="540" viewBox="0 0 680 540">
 <circle cx="153" cy="461.1" r="3.6" fill="#f4f4f4" stroke="#666" stroke-width="0.9"/>
 <path d="M153 459 V461.3 H154.8" stroke="#555" stroke-width="0.7" fill="none"/>
 <path d="M661.8 459 L665 462.4 M665 459 L661.8 462.4" stroke="#333" stroke-width="0.8"/>
</svg>
<div class="t" style="left:160.8px;top:457.4px;font-size:7.7px;color:#2e2e2e">Time</div>
<div class="tm" style="left:153px;top:481px">ROS 时间:</div>
<div class="inp" style="left:189.6px;top:478.5px;width:72.6px">1750039833.85</div>
<div class="tm" style="left:265.7px;top:481px">ROS 流逝时间:</div>
<div class="inp" style="left:317.5px;top:478.5px;width:72.5px">583.54</div>
<div class="tm" style="left:393.5px;top:481px">现实时间:</div>
<div class="inp" style="left:430px;top:478.5px;width:72.4px">1750039833.89</div>
<div class="tm" style="left:505.3px;top:481px">现实流逝时间:</div>
<div class="inp" style="left:556.4px;top:478.5px;width:73px">583.50</div>
<div class="btn" style="left:148.6px;top:504.5px;width:52.4px;height:14.8px;background:#f1f0ee;color:#333">复位流逝时间</div>
<div class="t" style="left:204.7px;top:508px;font-size:7.7px;color:#333"><b>Left-Click:</b> Rotate. <b>Middle-Click:</b> Move X/Y. <b>Right-Click:</b>: Move Z. <b>Shift</b>: More options.</div>
<div class="t" style="left:648.2px;top:505px;font-size:7.8px;color:#333">25 fps</div>
<div class="rb" style="left:141.6px;top:89.3px;width:532.5px;height:433.7px"></div>
<div class="lbl" style="left:650px;top:94px">5</div>

<!-- region 6 -->
<div class="a" style="left:683.5px;top:90px;width:263px;height:433px;background:#eeece9"></div>
<div class="a" style="left:683.5px;top:90px;width:263px;height:18.5px;background:#bab7b2"></div>

<!-- region 6 content -->
<div class="r6t" style="left:686.5px;top:97.5px;color:#2e2e2e">车辆管理 &gt;&gt; 基础配置</div>
<div class="a" style="left:941.2px;top:108.4px;width:4.8px;height:414px;background:#e2e0dc;border-left:0.5px solid #d4d1cc"></div>
<div class="a" style="left:941.5px;top:111px;width:4.3px;height:171px;background:#fcfcfb"></div>
<svg class="a" style="left:938px;top:108px" width="10" height="414" viewBox="938 108 10 414">
 <path d="M941.6 114.6 L943.1 112.4 L944.6 114.6Z" fill="#555"/>
 <path d="M942 519.6 L943.5 521.8 L945 519.6Z" fill="#555"/>
</svg>
<div class="gbox" style="top:124.2px;height:48.3px"></div>
<div class="r6t" style="left:693px;top:119.4px;color:#444">线控底盘</div>
<div class="rbox" style="top:140.9px;height:25.6px"></div>
<div class="chk" style="top:150.4px"></div>
<svg class="a" style="left:700px;top:148.7px" width="10" height="10" viewBox="0 0 10 10"><path d="M2.6 5 L4.2 7 L7.2 2.6" stroke="#333" stroke-width="0.9" fill="none"/></svg>
<div class="r6t" style="left:710.7px;top:151.0px">阿克曼 | 车辆底盘</div>
<div class="cfg" style="top:146.7px">配置</div>
<div class="gbox" style="top:187.7px;height:127.3px"></div>
<div class="r6t" style="left:693px;top:180.9px;color:#444">运动控制</div>
<div class="rbox" style="top:203px;height:26.2px"></div>
<div class="chk" style="top:212.8px"></div>
<div class="r6t" style="left:710.7px;top:213.4px">人工接管</div>
<div class="rbox" style="top:243.1px;height:26.3px"></div>
<div class="chk" style="top:252.9px"></div>
<div class="r6t" style="left:710.7px;top:253.5px">HORI | 方向盘控制</div>
<div class="rbox" style="top:283.8px;height:26.2px"></div>
<div class="chk" style="top:293.6px"></div>
<div class="r6t" style="left:710.7px;top:294.2px">键盘 | 方向键控制</div>
<div class="gbox" style="top:330.3px;height:47.5px"></div>
<div class="r6t" style="left:693px;top:324.4px;color:#444">车辆基础配置</div>
<div class="rbox" style="top:346px;height:25.4px"></div>
<div class="chk" style="top:355.4px"></div>
<svg class="a" style="left:700px;top:353.7px" width="10" height="10" viewBox="0 0 10 10"><path d="M2.6 5 L4.2 7 L7.2 2.6" stroke="#333" stroke-width="0.9" fill="none"/></svg>
<div class="r6t" style="left:710.7px;top:356.0px">车辆模型与设备坐标系</div>
<div class="gbox" style="top:392.6px;height:129px"></div>
<div class="r6t" style="left:693px;top:386.6px;color:#444">场地定位与地图坐标系</div>
<div class="rbox" style="top:408.7px;height:25.4px"></div>
<div class="chk" style="top:418.1px"></div>
<svg class="a" style="left:700px;top:416.4px" width="10" height="10" viewBox="0 0 10 10"><path d="M2.6 5 L4.2 7 L7.2 2.6" stroke="#333" stroke-width="0.9" fill="none"/></svg>
<div class="r6t" style="left:710.7px;top:418.7px">场地定位坐标系与定位转换</div>
<div class="rbox" style="top:447.6px;height:26.4px"></div>
<div class="chk" style="top:457.5px"></div>
<svg class="a" style="left:700px;top:455.8px" width="10" height="10" viewBox="0 0 10 10"><path d="M2.6 5 L4.2 7 L7.2 2.6" stroke="#333" stroke-width="0.9" fill="none"/></svg>
<div class="r6t" style="left:710.7px;top:458.1px">地图坐标系变换服务(world-&gt;map)</div>
<div class="cfg" style="top:453.8px">配置</div>
<div class="rbox" style="top:487.9px;height:26.3px"></div>
<div class="chk" style="top:497.8px"></div>
<svg class="a" style="left:700px;top:496.1px" width="10" height="10" viewBox="0 0 10 10"><path d="M2.6 5 L4.2 7 L7.2 2.6" stroke="#333" stroke-width="0.9" fill="none"/></svg>
<div class="r6t" style="left:710.7px;top:498.4px">地图坐标系变换服务(world-&gt;map2d)</div>
<div class="cfg" style="top:494.1px">配置</div>
<div class="a" style="left:683.5px;top:521.5px;width:263px;height:1.5px;background:#eeece9"></div>
<div class="rb" style="left:681.7px;top:88px;width:266.5px;height:437px"></div>
<div class="lbl" style="left:926.6px;top:94px">6</div>

<!-- footer -->
<div class="t" id="foot" style="left:386.5px;top:528px;font-size:8px;color:#333;transform:scaleX(0.955);transform-origin:0 0">北京中汽恒泰教育科技有限公司 版本所有（C）2021</div>
</body></html>
